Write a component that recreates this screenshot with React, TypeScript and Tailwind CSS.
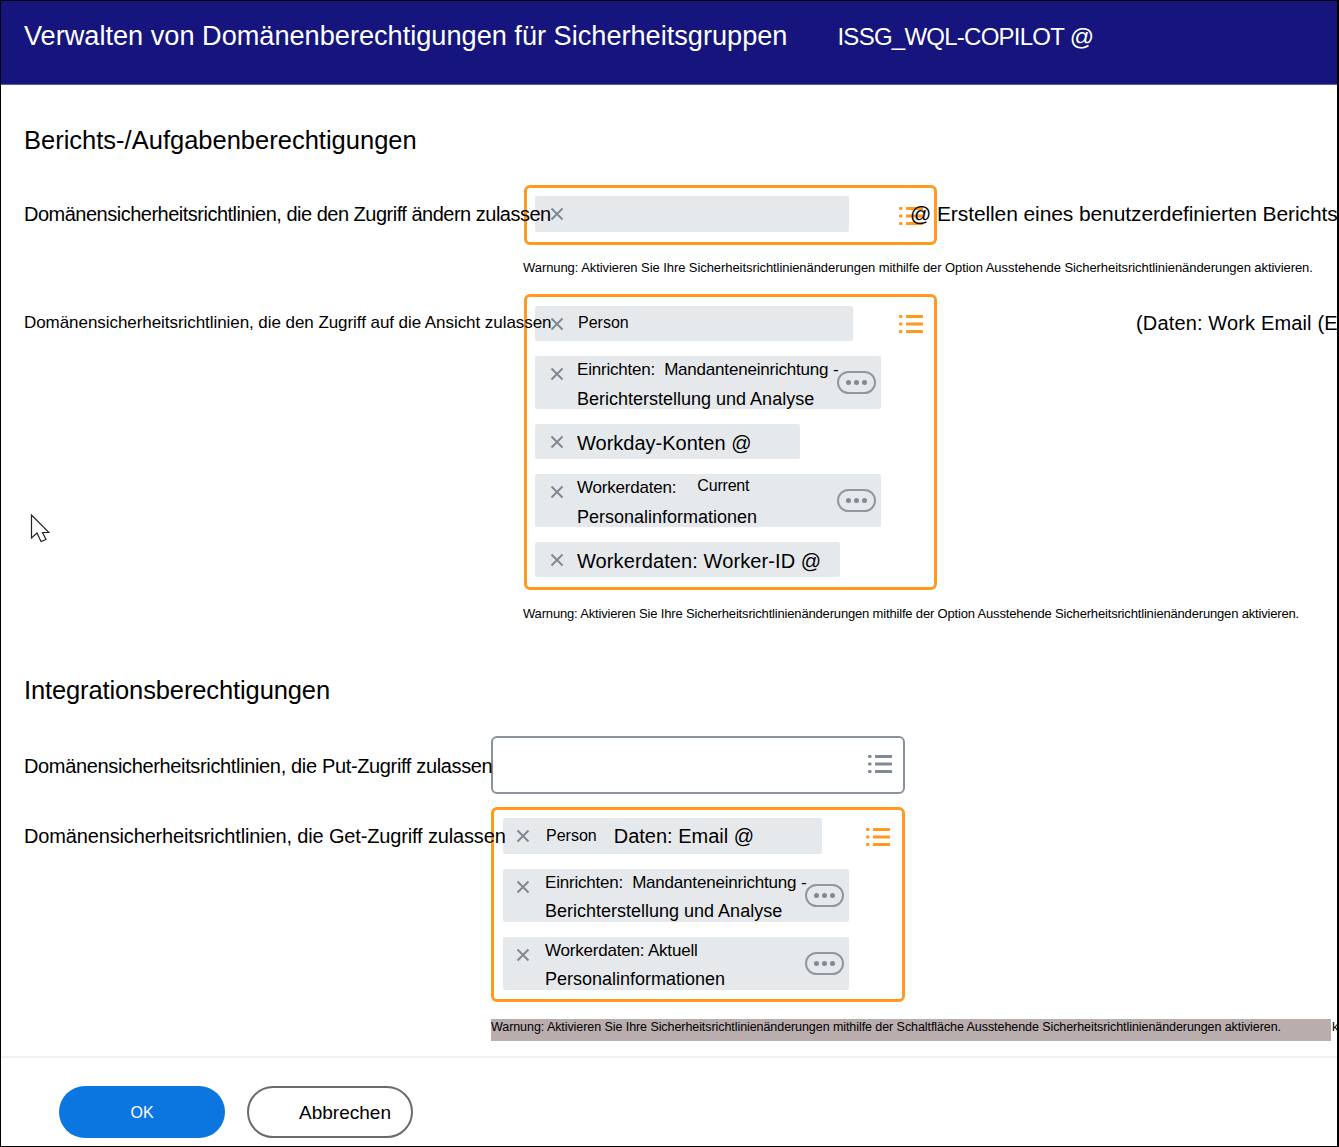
import React from 'react';

const ListIcon = ({ color }: { color: string }) => (
  <svg width="24" height="18" viewBox="0 0 24 18" className="shrink-0" style={{ color }}>
    <rect x="0" y="0" width="3.5" height="3" rx="1" fill="currentColor" />
    <rect x="0" y="7.5" width="3.5" height="3" rx="1" fill="currentColor" />
    <rect x="0" y="15" width="3.5" height="3" rx="1" fill="currentColor" />
    <rect x="7" y="0" width="17" height="3" rx="0.5" fill="currentColor" />
    <rect x="7" y="7.5" width="17" height="3" rx="0.5" fill="currentColor" />
    <rect x="7" y="15" width="17" height="3" rx="0.5" fill="currentColor" />
  </svg>
);

const CloseIcon = () => (
  <svg width="14" height="14" viewBox="0 0 14 14" className="shrink-0">
    <path d="M1.5 1.5 12.5 12.5M12.5 1.5 1.5 12.5" stroke="#7f8a94" strokeWidth="2" fill="none" />
  </svg>
);

const MoreButton = () => (
  <div className="ml-auto mr-[5px] mt-[15px] flex h-[23px] w-[39px] shrink-0 items-center justify-center gap-[3px] rounded-full border-2 border-[#8f989f]">
    <span className="h-[5px] w-[5px] rounded-full bg-[#7f8a94]" />
    <span className="h-[5px] w-[5px] rounded-full bg-[#7f8a94]" />
    <span className="h-[5px] w-[5px] rounded-full bg-[#7f8a94]" />
  </div>
);

const Chip = ({ size, pad = 'pl-[15px] gap-[13px]', children }: { size: string; pad?: string; children?: React.ReactNode }) => (
  <div className={`flex items-center rounded-[2px] bg-[#e6e9ec] ${size} ${pad}`}>
    <CloseIcon />
    <div className="whitespace-nowrap text-black">{children}</div>
  </div>
);

const TwoLineChip = ({
  first,
  second,
  pad = 'pl-[15px] gap-[13px]',
  firstHeight = 'h-[28px]',
}: {
  first: React.ReactNode;
  second: string;
  pad?: string;
  firstHeight?: string;
}) => (
  <div className={`flex h-[53px] w-[346px] items-start rounded-[2px] bg-[#e6e9ec] ${pad}`}>
    <div className="mt-[11px]">
      <CloseIcon />
    </div>
    <div className="w-[240px] shrink-0 whitespace-nowrap pt-[1px] text-black">
      <div className={`text-[17px] leading-[26px] tracking-[-0.2px] ${firstHeight}`}>{first}</div>
      <div className="text-[18px] leading-[28px]">{second}</div>
    </div>
    <MoreButton />
  </div>
);

const Warning = ({ children, className }: { children: React.ReactNode; className?: string }) => (
  <p className={`whitespace-nowrap leading-[16px] text-black ${className ?? ''}`}>{children}</p>
);

export default function App() {
  return (
    <div className="h-[1147px] w-full overflow-hidden border border-r-2 border-black bg-white font-['Liberation_Sans',Arial,sans-serif]">
      <header className="flex h-[84px] items-start whitespace-nowrap border-b border-[#5a5aa5] bg-[#15157d] pl-[23px] pt-[18px] text-white">
        <span className="text-[27.15px] leading-[34px]">Verwalten von Domänenberechtigungen für Sicherheitsgruppen</span>
        <span className="ml-[50px] text-[24px] leading-[36px] tracking-[-0.75px]">ISSG_WQL-COPILOT @</span>
      </header>

      <main className="pl-[23px]">
        <h2 className="mt-[40px] text-[25.5px] leading-[30px] text-black">Berichts-/Aufgabenberechtigungen</h2>

        <div className="mt-[30px] flex items-start whitespace-nowrap">
          <div className="relative z-10 mt-[15px] w-[500px] shrink-0 text-[20px] leading-[28px] tracking-[-0.5px] text-black">
            Domänensicherheitsrichtlinien, die den Zugriff ändern zulassen
          </div>
          <div className="flex h-[60px] w-[413px] shrink-0 rounded-[6px] border-[3px] border-[#ff9a1f] pl-[8px] pr-[11px] pt-[8px]">
            <Chip size="h-[36px] w-[314px]" />
            <div className="ml-auto mt-[11px]">
              <ListIcon color="#ff9a1f" />
            </div>
          </div>
          <div className="ml-[-27px] mt-[15px] shrink-0 text-[21px] leading-[28px] tracking-[-0.1px] text-black">
            @ Erstellen eines benutzerdefinierten Berichts
          </div>
        </div>
        <Warning className="ml-[499px] mt-[15px] text-[13px] tracking-[-0.07px]">
          Warnung: Aktivieren Sie Ihre Sicherheitsrichtlinienänderungen mithilfe der Option Ausstehende Sicherheitsrichtlinienänderungen aktivieren.
        </Warning>

        <div className="mt-[18px] flex items-start whitespace-nowrap">
          <div className="relative z-10 mt-[15px] w-[500px] shrink-0 text-[17px] leading-[28px] tracking-[-0.06px] text-black">
            Domänensicherheitsrichtlinien, die den Zugriff auf die Ansicht zulassen
          </div>
          <div className="flex w-[413px] shrink-0 rounded-[6px] border-[3px] border-[#ff9a1f] pb-[10px] pl-[8px] pr-[11px] pt-[9px]">
            <div className="flex flex-col gap-[15px]">
              <Chip size="h-[35px] w-[318px]">
                <span className="ml-[1px] inline-block -translate-y-[1px] text-[16px]">Person</span>
              </Chip>
              <TwoLineChip
                first={
                  <>
                    Einrichten:<span className="ml-[9px]">Mandanteneinrichtung -</span>
                  </>
                }
                second="Berichterstellung und Analyse"
              />
              <Chip size="h-[35px] w-[265px]">
                <span className="inline-block translate-y-[1px] text-[20px]">Workday-Konten @</span>
              </Chip>
              <TwoLineChip
                first={
                  <>
                    Workerdaten:
                    <span className="ml-[21px] inline-block -translate-y-[2px] text-[16px]">Current</span>
                  </>
                }
                second="Personalinformationen"
              />
              <Chip size="h-[35px] w-[305px]">
                <span className="inline-block translate-y-[1px] text-[20px] tracking-[0.1px]">Workerdaten: Worker-ID @</span>
              </Chip>
            </div>
            <div className="ml-auto mt-[9px]">
              <ListIcon color="#ff9a1f" />
            </div>
          </div>
          <div className="ml-[199px] mt-[15px] shrink-0 text-[20px] leading-[28px] tracking-[0.15px] text-black">
            (Daten: Work Email (E
          </div>
        </div>
        <Warning className="ml-[499px] mt-[16px] text-[13px] tracking-[-0.17px]">
          Warnung: Aktivieren Sie Ihre Sicherheitsrichtlinienänderungen mithilfe der Option Ausstehende Sicherheitsrichtlinienänderungen aktivieren.
        </Warning>

        <h2 className="mt-[53px] text-[25.5px] leading-[30px] tracking-[-0.12px] text-black">Integrationsberechtigungen</h2>

        <div className="mt-[31px] flex items-start whitespace-nowrap">
          <div className="relative z-10 mt-[16px] w-[467px] shrink-0 text-[20px] leading-[28px] tracking-[-0.35px] text-black">
            Domänensicherheitsrichtlinien, die Put-Zugriff zulassen
          </div>
          <div className="flex h-[58px] w-[414px] shrink-0 justify-end rounded-[6px] border-2 border-[#8a929c] pr-[11px] pt-[17px]">
            <ListIcon color="#7f8a94" />
          </div>
        </div>

        <div className="mt-[13px] flex items-start whitespace-nowrap">
          <div className="relative z-10 mt-[15px] w-[467px] shrink-0 text-[20px] leading-[28px] tracking-[-0.15px] text-black">
            Domänensicherheitsrichtlinien, die Get-Zugriff zulassen
          </div>
          <div className="flex w-[414px] shrink-0 rounded-[6px] border-[3px] border-[#ff9a1f] pb-[9px] pl-[9px] pr-[12px] pt-[8px]">
            <div className="flex flex-col gap-[15px]">
              <Chip size="h-[36px] w-[319px]" pad="pl-[13px] gap-[15px]">
                <span className="ml-[1px] inline-block -translate-y-[2px] text-[16px]">Person</span>
                <span className="ml-[17px] text-[20px]">Daten: Email @</span>
              </Chip>
              <TwoLineChip
                pad="pl-[13px] gap-[15px]"
                firstHeight="h-[27px]"
                first={
                  <>
                    Einrichten:<span className="ml-[9px]">Mandanteneinrichtung -</span>
                  </>
                }
                second="Berichterstellung und Analyse"
              />
              <TwoLineChip
                pad="pl-[13px] gap-[15px]"
                firstHeight="h-[27px]"
                first="Workerdaten: Aktuell"
                second="Personalinformationen"
              />
            </div>
            <div className="ml-auto mt-[10px]">
              <ListIcon color="#ff9a1f" />
            </div>
          </div>
        </div>

        <div className="mt-[17px] flex items-start">
          <div className="ml-[467px] h-[22px] w-[840px] shrink-0 bg-[#b9adad]">
            <Warning className="text-[12.5px] tracking-[-0.07px]">
              Warnung: Aktivieren Sie Ihre Sicherheitsrichtlinienänderungen mithilfe der Schaltfläche Ausstehende Sicherheitsrichtlinienänderungen aktivieren.
            </Warning>
          </div>
          <span className="ml-[1px] text-[13px] leading-[16px] text-black">k</span>
        </div>
      </main>

      <footer className="mt-[15px] flex gap-[22px] border-t-2 border-[#f0f0f0] pl-[58px] pt-[28px]">
        <button className="h-[52px] w-[166px] rounded-full bg-[#0b76e0] pt-[2px] text-[16px] text-white">OK</button>
        <button className="h-[52px] w-[166px] rounded-full border-2 border-[#6b6b6b] pl-[30px] pt-[3px] text-[19px] text-black">
          Abbrechen
        </button>
      </footer>

      <svg width="20" height="29" viewBox="0 0 20 29" className="absolute left-[30px] top-[514px]">
        <path d="M1.5 1V24L7 19 11 27.5 16 25.5 12.5 18.5H19Z" fill="#fff" stroke="#222" strokeWidth="1.2" />
      </svg>
    </div>
  );
}
